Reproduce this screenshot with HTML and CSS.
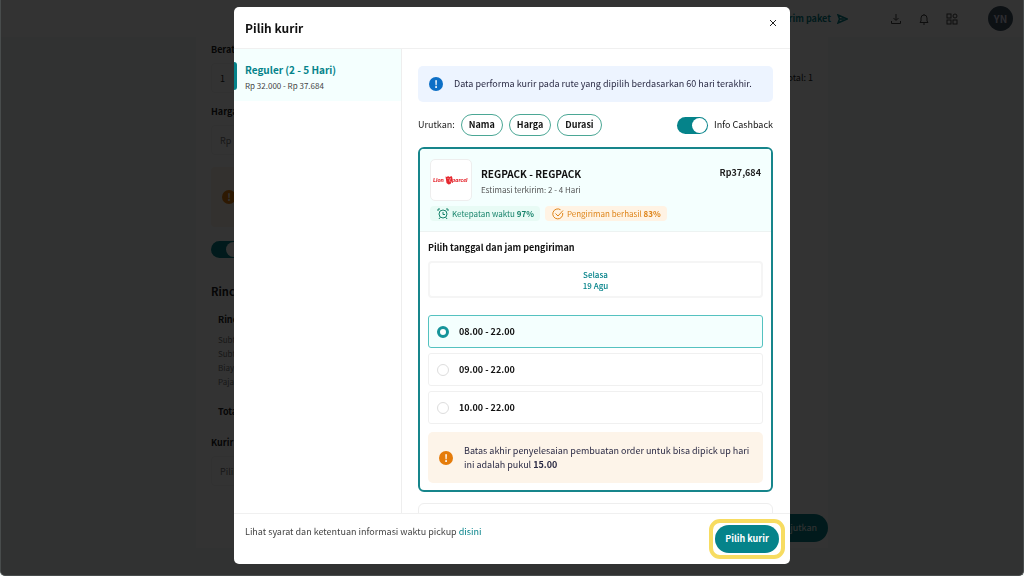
FILE: index.html
```html
<!DOCTYPE html>
<html lang="id">
<head>
    <meta charset="UTF-8">
    <meta name="viewport" content="width=device-width, initial-scale=1">
    <title>Pilih kurir</title>
    <link rel="stylesheet" href="styles.css">
</head>
<body>
    <!-- halaman order -->
    <div class="page">
        <header class="topbar">
            <a class="send-link" href="#">Kirim paket
                <svg width="11" height="10" viewBox="0 0 11 10"><path d="M1 1l9 4-9 4 1.500-4zM2.500 5h4" fill="none" stroke="currentColor" stroke-width="1.500"/></svg>
            </a>
            <nav class="tools">
                <button type="button" aria-label="Unduh">
                    <svg width="12" height="12" viewBox="0 0 12 12"><path d="M6 1v6M3.500 5L6 7.500 8.500 5M1.500 8v2.500h9V8"/></svg>
                </button>
                <button type="button" aria-label="Notifikasi">
                    <svg width="12" height="12" viewBox="0 0 12 12"><path d="M2 9.500h8L9 8V5a3 3 0 0 0-6 0v3zM5 11h2M6 2V1"/></svg>
                </button>
                <button type="button" aria-label="Menu">
                    <svg width="12" height="12" viewBox="0 0 12 12"><rect x="1" y="1" width="4" height="4"/><circle cx="9" cy="3" r="2"/><rect x="1" y="7" width="4" height="4"/><rect x="7" y="7" width="4" height="4"/></svg>
                </button>
            </nav>
            <span class="avatar">YN</span>
        </header>
        <main class="order">
            <div class="field">
                <div class="field-head"><label for="berat">Berat</label><span>Total: 1</span></div>
                <input id="berat" type="text" value="1">
            </div>
            <div class="field">
                <label for="harga">Harga</label>
                <input id="harga" class="price" type="text" value="Rp">
            </div>
            <div class="order-note"><span class="mark mark-orange"></span></div>
            <input class="switch" type="checkbox" aria-label="Asuransi" checked>
            <h2>Rincian</h2>
            <div class="summary">
                <h3>Rincian</h3>
                <ul>
                    <li>Subtotal</li>
                    <li>Subtotal</li>
                    <li>Biaya</li>
                    <li>Pajak</li>
                </ul>
                <h3>Total</h3>
            </div>
            <div class="field courier">
                <label for="kurir">Kurir</label>
                <input id="kurir" class="price" type="text" value="Pilih">
            </div>
            <button type="button" class="next">Lanjutkan</button>
        </main>
    </div>

    <!-- modal pilih kurir -->
    <div class="overlay">
        <section class="modal" role="dialog" aria-labelledby="judul">
            <header class="modal-header">
                <h1 id="judul">Pilih kurir</h1>
                <button type="button" class="close" aria-label="Tutup">
                    <svg width="8" height="8" viewBox="0 0 8 8"><path d="M1 1l6 6M7 1L1 7" stroke="currentColor"/></svg>
                </button>
            </header>

            <div class="modal-body">
                <aside class="services">
                    <a class="service" href="#">
                        <strong>Reguler (2 - 5 Hari)</strong>
                        <span>Rp 32.000 - Rp 37.684</span>
                    </a>
                </aside>

                <div class="content">
                    <div class="alert alert-info">
                        <span class="mark mark-blue"></span>
                        <p>Data performa kurir pada rute yang dipilih berdasarkan 60 hari terakhir.</p>
                    </div>

                    <div class="sort">
                        <span>Urutkan:</span>
                        <button type="button" class="chip">Nama</button>
                        <button type="button" class="chip">Harga</button>
                        <button type="button" class="chip">Durasi</button>
                        <label class="cashback"><input class="switch" type="checkbox" checked>Info Cashback</label>
                    </div>

                    <article class="card">
                        <div class="card-top">
                            <div class="courier-info">
                                <div class="logo">
                                    <svg width="36" height="12" viewBox="0 0 36 12" role="img" aria-label="Lion Parcel">
                                        <g fill="#e5282f" font-family="Lato, sans-serif" font-size="6" font-weight="900" font-style="italic">
                                            <text x="0" y="8">Lion</text>
                                            <text x="19" y="8">parcel</text>
                                        </g>
                                        <path d="M12.500 2.500l1.500.500 1-1 1.500 1 2-1 1 2-.500 3-1.500 3-2 .500-2-1.500z" fill="#e5282f"/>
                                        <path d="M14.500 4l1 1M17.500 4l-1 3 1 1" stroke="#fff" stroke-width=".500" fill="none"/>
                                    </svg>
                                </div>
                                <div class="courier-name">
                                    <h2>REGPACK - REGPACK</h2>
                                    <p>Estimasi terkirim: 2 - 4 Hari</p>
                                </div>
                                <strong class="cost">Rp37,684</strong>
                            </div>
                            <div class="badges">
                                <span class="badge badge-green">
                                    <svg width="12" height="12" viewBox="0 0 12 12"><circle cx="6" cy="6" r="4"/><path d="M6 4v2.500h2M1 3V1h2M9 1h2v2M3 9.500l-1 1.500M9 9.500l1 1.500"/></svg>
                                    <span>Ketepatan waktu <b>97%</b></span>
                                </span>
                                <span class="badge badge-orange">
                                    <svg width="12" height="12" viewBox="0 0 12 12"><path d="M10.700 5A5 5 0 1 1 8.500 1.700M3.500 5.500L6 8l5-5.500"/></svg>
                                    <span>Pengiriman berhasil <b>83%</b></span>
                                </span>
                            </div>
                        </div>

                        <div class="card-body">
                            <h3>Pilih tanggal dan jam pengiriman</h3>
                            <button type="button" class="date">Selasa<br>19 Agu</button>
                            <div class="slots">
                                <label class="slot"><input type="radio" name="jam" checked>08.00 - 22.00</label>
                                <label class="slot"><input type="radio" name="jam">09.00 - 22.00</label>
                                <label class="slot"><input type="radio" name="jam">10.00 - 22.00</label>
                            </div>
                            <div class="alert alert-warning">
                                <span class="mark mark-orange"></span>
                                <p>Batas akhir penyelesaian pembuatan order untuk bisa dipick up hari ini adalah pukul <b>15.00</b></p>
                            </div>
                        </div>
                    </article>

                    <article class="card card-next"></article>
                </div>
            </div>

            <footer class="modal-footer">
                <p>Lihat syarat dan ketentuan informasi waktu pickup <a href="#">disini</a></p>
                <button type="button" class="submit">Pilih kurir</button>
            </footer>
        </section>
    </div>
</body>
</html>
```
FILE: styles.css
```css
* {
    box-sizing: border-box;
}
body {
    margin: 0;
    height: 100vh;
    overflow: hidden;
    background: #fff;
    color: #222;
    font-family: "Noto Sans CJK SC", "Noto Sans", sans-serif;
    font-size: 9px;
    line-height: 14px;
}
h1, h2, h3, p, ul {
    margin: 0;
    padding: 0;
}
button, input {
    font: inherit;
    color: inherit;
}
button {
    padding: 0;
    border: 0;
    background: none;
    cursor: pointer;
}
a {
    color: #05838a;
    text-decoration: none;
}

/* halaman order */
.page {
    height: 100vh;
    overflow: hidden;
    background: #f5faf8;
}
.topbar {
    display: flex;
    align-items: center;
    justify-content: flex-end;
    height: 37px;
    padding-right: 11px;
    background: #fff;
}
.send-link {
    display: flex;
    align-items: center;
    gap: 6px;
    margin-right: 42px;
    font-weight: bold;
}
.tools {
    display: flex;
    gap: 16px;
    margin-right: 30px;
}
.tools button {
    width: 12px;
    height: 12px;
}
.tools svg {
    display: block;
    fill: none;
    stroke: #444;
}
.avatar {
    width: 25px;
    border-radius: 50%;
    background: #456;
    color: #dde;
    font-size: 10px;
    font-weight: bold;
    line-height: 25px;
    text-align: center;
}
.order {
    display: flex;
    flex-direction: column;
    align-items: flex-start;
    max-width: 632px;
    margin: 0 auto;
    padding: 6px 0 6px 15px;
    background: #fff;
}
.field {
    width: 100%;
    margin-bottom: 12px;
    font-weight: bold;
}
.field-head {
    display: flex;
    justify-content: space-between;
    padding-right: 15px;
}
.field-head span {
    padding-top: 28px;
    margin-bottom: -28px;
    font-weight: normal;
}
.field input {
    display: block;
    width: 30%;
    height: 30px;
    margin-top: 6px;
    padding: 0 8px;
    border: 1px solid #f2f2f2;
    border-radius: 4px;
    font-weight: normal;
}
.field .price {
    color: #777;
}
.order-note {
    width: 50%;
    height: 60px;
    margin-bottom: 14px;
    padding: 23px 11px;
    border-radius: 4px;
    background: #fdf4e9;
}
.order h2 {
    margin: 26px 0 15px;
    font-size: 11px;
}
.order h3 {
    font-size: 9px;
}
.summary {
    padding-left: 7px;
}
.summary ul {
    margin: 6px 0 16px;
    color: #777;
    list-style: none;
    font-size: 8px;
}
.courier {
    margin: 17px 0 28px;
}
.next {
    align-self: flex-end;
    padding: 0 11px;
    height: 28px;
    border-radius: 14px;
    background: #05838a;
    color: #fff;
}

/* komponen kecil */
.switch {
    position: relative;
    appearance: none;
    width: 31px;
    height: 17px;
    margin: 0;
    border-radius: 9px;
    background: #05838a;
}
.switch::after {
    content: "";
    position: absolute;
    top: 1px;
    right: 1px;
    width: 15px;
    height: 15px;
    border-radius: 50%;
    background: #fff;
}
.mark {
    flex: none;
    display: block;
    width: 14px;
    height: 14px;
    border-radius: 50%;
    color: #fff;
    font-size: 10px;
    font-weight: bold;
    text-align: center;
}
.mark::before {
    content: "!";
}
.mark-blue {
    background: #0d6fc6;
}
.mark-orange {
    background: #e57c0b;
}

/* modal */
.overlay {
    position: fixed;
    inset: 0;
    display: flex;
    justify-content: center;
    padding: 7px 15px 11px;
    border: 1px solid #484c4c;
    border-top: 0;
    border-radius: 0 0 5px 5px;
    background: rgba(0, 0, 0, 0.8);
}
.modal {
    display: flex;
    flex-direction: column;
    width: 100%;
    max-width: 556px;
    overflow: hidden;
    border-radius: 5px;
    background: #fff;
}
.modal-header {
    flex: none;
    display: flex;
    align-items: center;
    justify-content: space-between;
    height: 42px;
    padding: 0 13px 0 11px;
    border-bottom: 1px solid #f0f0f0;
}
.modal-header h1 {
    color: #111;
    font-size: 12px;
}
.close {
    display: flex;
    padding: 0;
    margin-bottom: 9px;
}
.modal-body {
    flex: 1;
    display: flex;
    min-height: 0;
}
.services {
    flex: none;
    width: 168px;
    border-right: 1px solid #eee;
}
.service {
    position: relative;
    display: block;
    padding: 12px 11px 8px;
    background: #f4fffe;
}
.service::before {
    content: "";
    position: absolute;
    top: 13px;
    left: 0;
    width: 3px;
    height: 28px;
    border-radius: 0 3px 3px 0;
    background: #05838a;
}
.service strong {
    display: block;
    font-size: 10px;
    line-height: 18px;
}
.service span {
    color: #444;
    font-size: 8px;
}
.content {
    flex: 1;
    padding: 17px 17px 0 16px;
    overflow: hidden;
}
.alert {
    display: flex;
    align-items: center;
    border-radius: 5px;
    color: #2b2b45;
}
.alert-info {
    gap: 11px;
    height: 36px;
    padding: 0 11px;
    background: #edf4ff;
}
.sort {
    display: flex;
    align-items: center;
    gap: 6px;
    margin: 12px 0 11px;
}
.chip {
    height: 22px;
    padding: 0 7px;
    border: 1px solid #4ba795;
    border-radius: 11px;
    color: #111;
    font-weight: bold;
}
.cashback {
    display: flex;
    align-items: center;
    gap: 6px;
    margin-left: auto;
    color: #111;
}
.card {
    border: 2px solid #16858b;
    border-radius: 6px;
    overflow: hidden;
}
.card-top {
    height: 83px;
    padding: 10px;
    border-bottom: 1px solid #edf3f2;
    background: #f4fffe;
}
.courier-info {
    display: flex;
    gap: 9px;
}
.logo {
    display: flex;
    align-items: center;
    justify-content: center;
    width: 42px;
    height: 42px;
    border: 1px solid #eee;
    border-radius: 5px;
    background: #fff;
}
.courier-name {
    flex: 1;
    padding-top: 7px;
}
.courier-name h2 {
    color: #111;
    font-size: 10px;
    line-height: 16px;
}
.courier-name p {
    color: #555;
    font-size: 8px;
    line-height: 16px;
}
.cost {
    padding-top: 7px;
}
.badges {
    display: flex;
    gap: 5px;
    margin-top: 5px;
}
.badge {
    display: flex;
    align-items: center;
    gap: 3px;
    height: 15px;
    padding: 0 6px 0 7px;
    border-radius: 4px;
    font-size: 8px;
}
.badge svg {
    fill: none;
    stroke: currentColor;
}
.badge-green {
    background: #e8fbf5;
    color: #16836a;
}
.badge-orange {
    background: #fff3e4;
    color: #de8419;
}
.card-body {
    padding: 9px 8px 7px;
}
.card-body h3 {
    color: #111;
    font-size: 9px;
}
.date {
    display: block;
    width: 100%;
    height: 37px;
    margin: 6px 0 17px;
    border: 2px solid #f5f5f5;
    border-radius: 4px;
    color: #05838a;
    font-size: 8px;
    font-weight: 500;
    line-height: 11px;
}
.slots {
    display: grid;
    gap: 5px;
}
.slot {
    display: flex;
    align-items: center;
    gap: 10px;
    height: 33px;
    padding: 0 8px;
    border: 1px solid #f0f0f0;
    border-radius: 3px;
    color: #111;
    font-weight: bold;
}
.slot:has(:checked) {
    border-color: #55c2c0;
    background: #f4fffe;
}
.slot input {
    appearance: none;
    width: 12px;
    height: 12px;
    margin: 0;
    border: 1px solid #ddd;
    border-radius: 50%;
    background: #fff;
}
.slot input:checked {
    border: 3px solid #16949a;
}
.alert-warning {
    gap: 11px;
    height: 51px;
    margin-top: 8px;
    padding: 0 11px;
    background: #fdf4e9;
}
.card-next {
    height: 60px;
    margin-top: 11px;
    border: 1px solid #eee;
}
.modal-footer {
    flex: none;
    display: flex;
    justify-content: space-between;
    height: 51px;
    padding: 11px 11px 0;
    border-top: 1px solid #f0f0f0;
    color: #444;
}
.submit {
    position: relative;
    width: 64px;
    height: 28px;
    border-radius: 14px;
    background: #05838a;
    color: #fff;
    font-weight: bold;
}
/* sorotan di sekitar tombol */
.submit::after {
    content: "";
    position: absolute;
    inset: -6px;
    border: 4px solid #f7dc61;
    border-radius: 11px;
}
```
